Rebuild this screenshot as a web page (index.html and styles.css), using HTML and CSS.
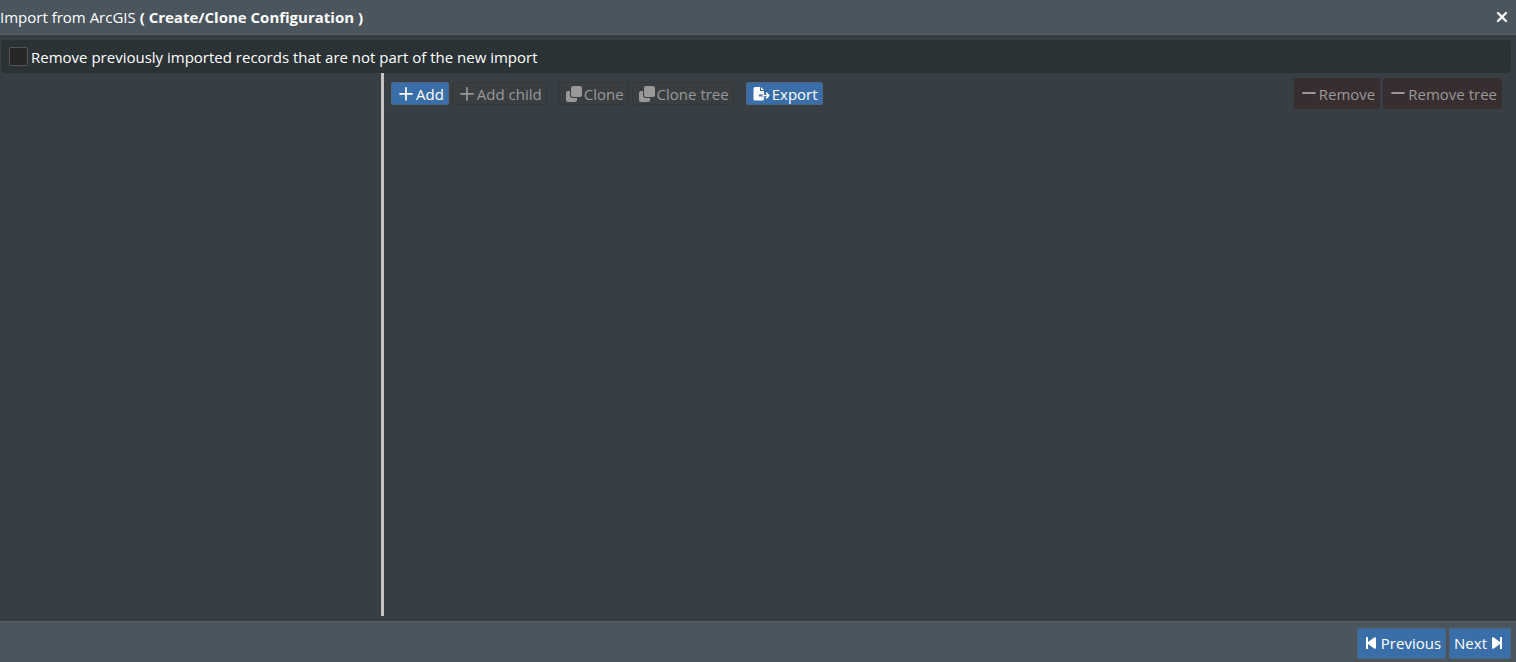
FILE: index.html
```html
<!DOCTYPE html>
<html lang="en">
<head>
  <meta charset="UTF-8" />
  <meta name="viewport" content="width=device-width, initial-scale=1" />
  <title>Import from ArcGIS</title>
  <link rel="stylesheet" href="styles.css">
</head>
<body>
  <header class="titlebar">
    <h1>Import from ArcGIS <strong>( Create/Clone Configuration )</strong></h1>
    <button type="button" class="close" aria-label="Close">
      <svg width="12" height="12" viewBox="0 0 12 12"><path d="M2 2l8 8M10 2l-8 8" stroke="currentColor" stroke-width="2.4" stroke-linecap="round"/></svg>
    </button>
  </header>

  <div class="options">
    <input type="checkbox" id="removeOld" />
    <label for="removeOld">Remove previously imported records that are not part of the new import</label>
  </div>

  <main class="split">
    <nav class="tree" aria-label="Configurations"></nav>
    <div class="splitter"></div>
    <section class="detail">
      <div class="toolbar">
        <div class="group">
          <button type="button" class="btn">
            <svg class="icon" width="16" height="16" viewBox="0 0 16 16"><path d="M8 1.800v12M2 7.800h12" stroke="currentColor" stroke-width="1.700" stroke-linecap="round"/></svg>Add
          </button>
          <button type="button" class="btn" disabled>
            <svg class="icon" width="16" height="16" viewBox="0 0 16 16"><path d="M8 1.800v12M2 7.800h12" stroke="currentColor" stroke-width="1.700" stroke-linecap="round"/></svg>Add child
          </button>
        </div>
        <div class="group">
          <button type="button" class="btn" disabled>
            <svg class="icon" width="16" height="16" viewBox="0 0 16 16"><path d="M7 0h7a2 2 0 0 1 2 2v7a2 2 0 0 1-2 2H7a2 2 0 0 1-2-2V2a2 2 0 0 1 2-2zM2 5h2v4a3 3 0 0 0 3 3h4v2a2 2 0 0 1-2 2H2a2 2 0 0 1-2-2V7a2 2 0 0 1 2-2z" fill="currentColor"/></svg>Clone
          </button>
          <button type="button" class="btn" disabled>
            <svg class="icon" width="16" height="16" viewBox="0 0 16 16"><path d="M7 0h7a2 2 0 0 1 2 2v7a2 2 0 0 1-2 2H7a2 2 0 0 1-2-2V2a2 2 0 0 1 2-2zM2 5h2v4a3 3 0 0 0 3 3h4v2a2 2 0 0 1-2 2H2a2 2 0 0 1-2-2V7a2 2 0 0 1 2-2z" fill="currentColor"/></svg>Clone tree
          </button>
        </div>
        <div class="group">
          <button type="button" class="btn">
            <svg class="icon" width="17" height="16" viewBox="0 0 17 16"><path d="M2 1h5v4h4v3.500H6v2h5V13a1.500 1.500 0 0 1-1.500 1.500H2A1.500 1.500 0 0 1 .5 13V2.500A1.500 1.500 0 0 1 2 1zM8 1l3 3H8z" fill="currentColor"/><path d="M10 9.500h6M13.500 7l2.500 2.500-2.500 2.500" stroke="currentColor" stroke-width="1.400" fill="none" stroke-linecap="round" stroke-linejoin="round"/></svg>Export
          </button>
        </div>
        <div class="group right">
          <button type="button" class="btn large danger" disabled>
            <svg class="icon" width="16" height="16" viewBox="0 0 16 16"><path d="M2 7h12" stroke="currentColor" stroke-width="1.800" stroke-linecap="round"/></svg>Remove
          </button>
          <button type="button" class="btn large danger" disabled>
            <svg class="icon" width="16" height="16" viewBox="0 0 16 16"><path d="M2 7h12" stroke="currentColor" stroke-width="1.800" stroke-linecap="round"/></svg>Remove tree
          </button>
        </div>
      </div>
    </section>
  </main>

  <footer class="actions">
    <button type="button" class="btn large">
      <svg class="icon prev" width="12" height="12" viewBox="0 0 12 12"><path d="M1 0h2v5l6.500-4.800Q11 0 11 1v10q0 1-1.500.8L3 7v5H1z" fill="currentColor"/></svg>Previous
    </button>
    <button type="button" class="btn large">
      Next<svg class="icon next" width="12" height="12" viewBox="0 0 12 12"><path d="M11 0H9v5L2.500.2Q1 0 1 1v10q0 1 1.500.8L9 7v5h2z" fill="currentColor"/></svg>
    </button>
  </footer>
</body>
</html>
```

FILE: styles.css
```css
:root {
  --bg: #373e44;
  --bar: #4a555d;
  --bar-line: #565d63;
  --panel: #2b3235;
  --blue: #3a6ea8;
  --muted: #999;
  font-family: "Open Sans", sans-serif;
}

* {
  box-sizing: border-box;
  margin: 0;
  padding: 0;
}

body {
  min-height: 100vh;
  display: flex;
  flex-direction: column;
  background: var(--bg);
  color: #fff;
  font-size: 15px;
  line-height: 20px;
}

.titlebar {
  display: flex;
  align-items: center;
  justify-content: space-between;
  height: 35px;
  padding-right: 8px;
  background: var(--bar);
  border-bottom: 1px solid var(--bar-line);
}

h1 {
  font-size: 15px;
  font-weight: 400;
}

.close {
  display: flex;
  background: none;
  border: none;
  color: #fff;
  cursor: pointer;
}

.options {
  display: flex;
  align-items: center;
  gap: 3px;
  height: 33px;
  margin: 5px 5px 0 1px;
  padding: 0 8px;
  background: var(--panel);
  border-radius: 4px;
}

.options input {
  appearance: none;
  width: 19px;
  height: 19px;
  background: #262626;
  border: 1px solid #555;
  border-radius: 2px;
}

.options input:checked {
  background: var(--blue);
}

.split {
  flex: 1;
  display: flex;
  margin-bottom: 5px;
}

.tree {
  flex: 0 0 381px;
}

.splitter {
  width: 3px;
  background: #c4c4c4;
  cursor: col-resize;
}

.detail {
  flex: 1;
}

.toolbar {
  display: flex;
  align-items: center;
  gap: 12px;
  padding: 5px 14px 0 7px;
}

.group {
  display: flex;
  gap: 3px;
}

.group.right {
  margin-left: auto;
}

.btn {
  display: flex;
  align-items: center;
  height: 23px;
  padding: 0 4px 0 6px;
  font: inherit;
  color: #fff;
  white-space: nowrap;
  background: var(--blue);
  border: 1px solid #4c6684;
  border-radius: 2px;
  cursor: pointer;
}

.btn:disabled {
  color: var(--muted);
  background: #3a3e41;
  border-color: #33383b;
  cursor: default;
}

.btn.large {
  height: 31px;
}

.btn.danger:disabled {
  background: #382e30;
  border-color: #362f31;
}

.icon {
  flex: none;
  margin-right: 2px;
}

.actions {
  display: flex;
  align-items: center;
  justify-content: flex-end;
  gap: 3px;
  height: 41px;
  padding: 2px 5px 0 0;
  background: var(--bar);
  border-top: 1px solid var(--bar-line);
}

.actions .btn {
  padding: 0 4px;
}

.icon.prev {
  margin: 0 4px 0 3px;
}

.icon.next {
  margin: 0 3px 0 4px;
}
```
